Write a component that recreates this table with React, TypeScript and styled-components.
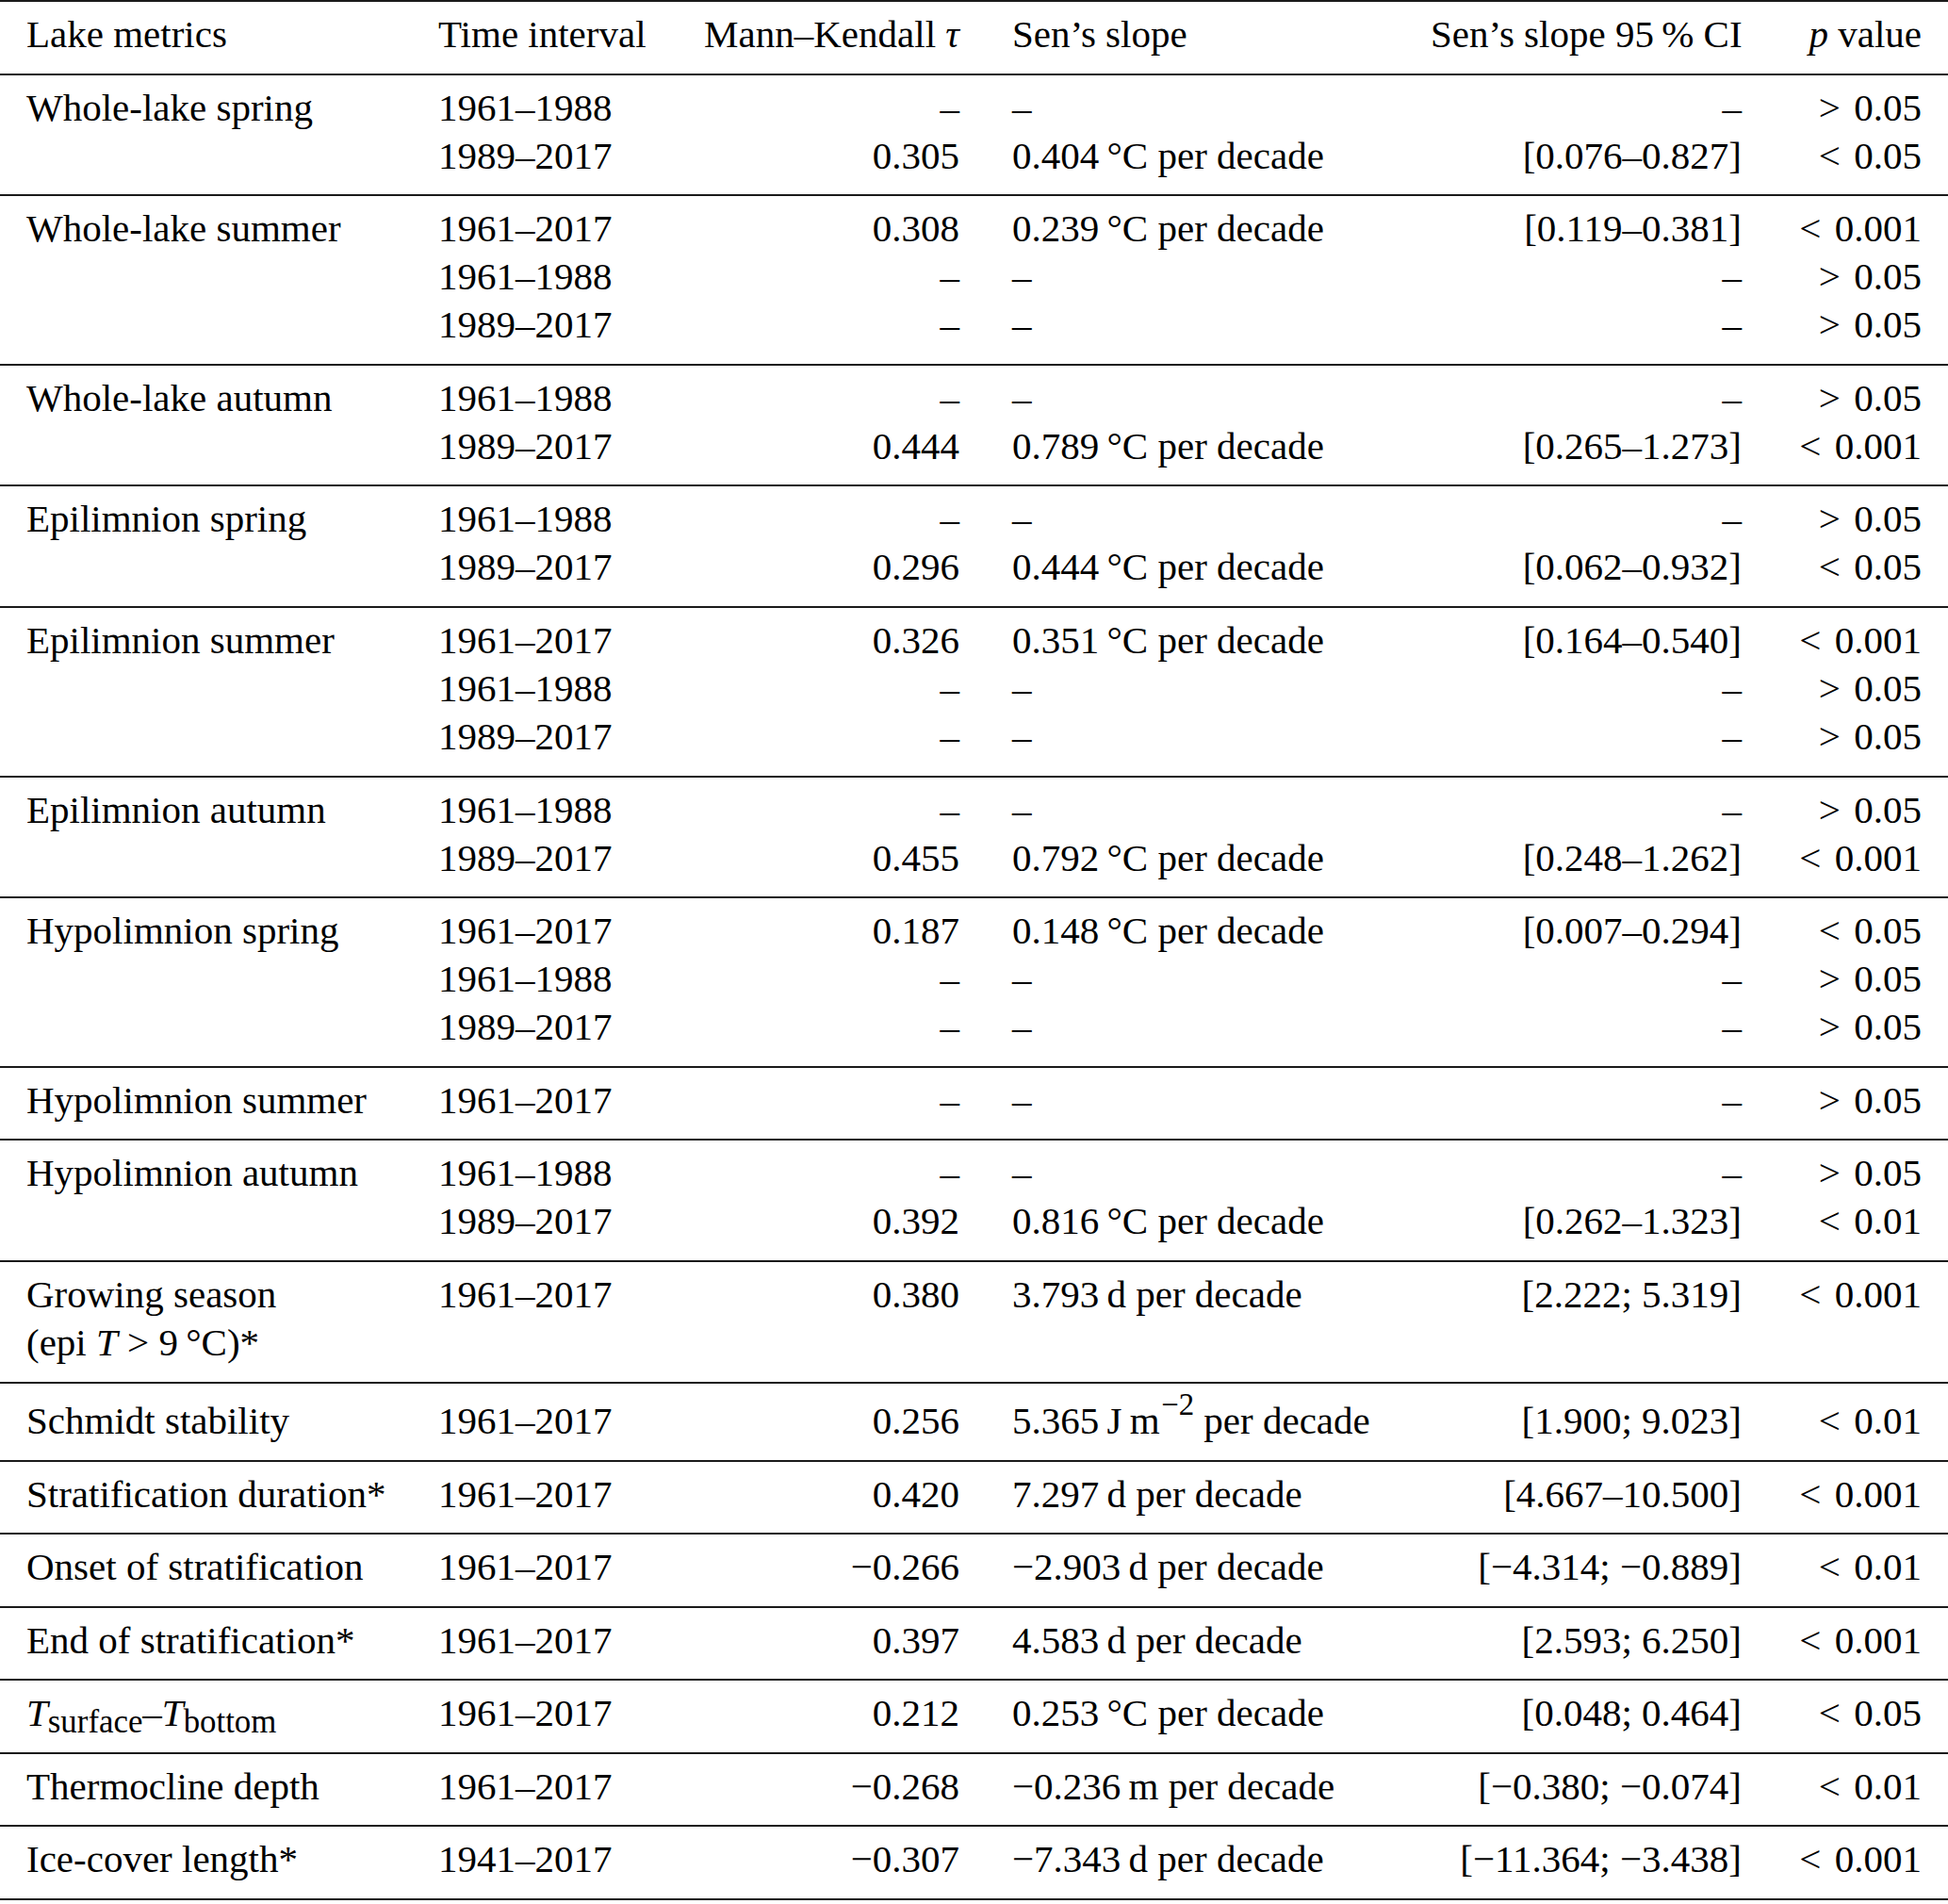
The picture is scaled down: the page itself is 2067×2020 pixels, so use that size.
import React, { type ReactNode } from "react";
import styled, { createGlobalStyle } from "styled-components";

/* ── Styled ── */

const GlobalStyle = createGlobalStyle`
  html, body {
    margin: 0;
    padding: 0;
    background: #ffffff;
  }
  body {
    font-family: "Liberation Serif", "Times New Roman", serif;
    color: #000000;
  }
`;

const Table = styled.div`
  width: 2067px;
  border-bottom: 2px solid #1a1a1a;
  font-size: 41px;
`;

const Group = styled.div<{ $extra?: number }>`
  display: grid;
  grid-template-columns: 437px 274px 335px 444px 386px 191px;
  border-top: 2px solid #1a1a1a;
  padding: ${(p) => 9 + (p.$extra ?? 0)}px 0 15.6px 0;
`;

const Cell = styled.div<{ $right?: boolean }>`
  display: flex;
  flex-direction: column;
  padding: 0 28px;
  text-align: ${(p) => (p.$right ? "right" : "left")};
  white-space: nowrap;
`;

const Line = styled.div`
  height: 51px;
  line-height: 51px;
`;

const I = styled.i`
  font-style: italic;
`;

const Rel = styled.span`
  padding-right: 0.1em;
`;

const Sub = styled.sub`
  font-size: 0.85em;
  vertical-align: -0.2em;
  line-height: 0;
`;

const Sup = styled.sup`
  font-size: 0.8em;
  vertical-align: 0.6em;
  line-height: 0;
  padding-left: 0.05em;
`;

/* ── Data ── */

const T = "\u2009";
const N = "–";
const M = "−";

type Values = [ReactNode, ReactNode, ReactNode, ReactNode, ReactNode];

type Row = {
  label: ReactNode[];
  lines: Values[];
  extra?: number;
};

const deg = (v: string) => `${v}${T}°C per decade`;
const days = (v: string) => `${v}${T}d per decade`;
const lt = (v: string) => (
  <>
    <Rel>&lt;</Rel> {v}
  </>
);
const gt = (v: string) => (
  <>
    <Rel>&gt;</Rel> {v}
  </>
);
const empty = (interval: string, p: ReactNode): Values => [interval, N, N, N, p];

const rows: Row[] = [
  {
    label: ["Whole-lake spring"],
    lines: [
      empty("1961–1988", gt("0.05")),
      ["1989–2017", "0.305", deg("0.404"), "[0.076–0.827]", lt("0.05")],
    ],
  },
  {
    label: ["Whole-lake summer"],
    lines: [
      ["1961–2017", "0.308", deg("0.239"), "[0.119–0.381]", lt("0.001")],
      empty("1961–1988", gt("0.05")),
      empty("1989–2017", gt("0.05")),
    ],
  },
  {
    label: ["Whole-lake autumn"],
    lines: [
      empty("1961–1988", gt("0.05")),
      ["1989–2017", "0.444", deg("0.789"), "[0.265–1.273]", lt("0.001")],
    ],
  },
  {
    label: ["Epilimnion spring"],
    lines: [
      empty("1961–1988", gt("0.05")),
      ["1989–2017", "0.296", deg("0.444"), "[0.062–0.932]", lt("0.05")],
    ],
  },
  {
    label: ["Epilimnion summer"],
    lines: [
      ["1961–2017", "0.326", deg("0.351"), "[0.164–0.540]", lt("0.001")],
      empty("1961–1988", gt("0.05")),
      empty("1989–2017", gt("0.05")),
    ],
  },
  {
    label: ["Epilimnion autumn"],
    lines: [
      empty("1961–1988", gt("0.05")),
      ["1989–2017", "0.455", deg("0.792"), "[0.248–1.262]", lt("0.001")],
    ],
  },
  {
    label: ["Hypolimnion spring"],
    lines: [
      ["1961–2017", "0.187", deg("0.148"), "[0.007–0.294]", lt("0.05")],
      empty("1961–1988", gt("0.05")),
      empty("1989–2017", gt("0.05")),
    ],
  },
  {
    label: ["Hypolimnion summer"],
    lines: [empty("1961–2017", gt("0.05"))],
  },
  {
    label: ["Hypolimnion autumn"],
    lines: [
      empty("1961–1988", gt("0.05")),
      ["1989–2017", "0.392", deg("0.816"), "[0.262–1.323]", lt("0.01")],
    ],
  },
  {
    label: [
      "Growing season",
      <>
        (epi <I>T</I> &gt; 9{T}°C)*
      </>,
    ],
    lines: [["1961–2017", "0.380", days("3.793"), "[2.222; 5.319]", lt("0.001")]],
  },
  {
    label: ["Schmidt stability"],
    extra: 5.4,
    lines: [
      [
        "1961–2017",
        "0.256",
        <>
          5.365{T}J{T}m<Sup>{M}2</Sup> per decade
        </>,
        "[1.900; 9.023]",
        lt("0.01"),
      ],
    ],
  },
  {
    label: ["Stratification duration*"],
    lines: [["1961–2017", "0.420", days("7.297"), "[4.667–10.500]", lt("0.001")]],
  },
  {
    label: ["Onset of stratification"],
    lines: [
      ["1961–2017", `${M}0.266`, days(`${M}2.903`), `[${M}4.314; ${M}0.889]`, lt("0.01")],
    ],
  },
  {
    label: ["End of stratification*"],
    lines: [["1961–2017", "0.397", days("4.583"), "[2.593; 6.250]", lt("0.001")]],
  },
  {
    label: [
      <>
        <I>T</I>
        <Sub>surface</Sub>–<I>T</I>
        <Sub>bottom</Sub>
      </>,
    ],
    lines: [["1961–2017", "0.212", deg("0.253"), "[0.048; 0.464]", lt("0.05")]],
  },
  {
    label: ["Thermocline depth"],
    lines: [
      [
        "1961–2017",
        `${M}0.268`,
        `${M}0.236${T}m per decade`,
        `[${M}0.380; ${M}0.074]`,
        lt("0.01"),
      ],
    ],
  },
  {
    label: ["Ice-cover length*"],
    lines: [
      ["1941–2017", `${M}0.307`, days(`${M}7.343`), `[${M}11.364; ${M}3.438]`, lt("0.001")],
    ],
  },
];

// alignment of the five value columns
const rightAligned = [false, true, false, true, true];

/* ── Page ── */

export default function App() {
  return (
    <>
      <GlobalStyle />
      <Table>
        <Group>
          <Cell>
            <Line>Lake metrics</Line>
          </Cell>
          <Cell>
            <Line>Time interval</Line>
          </Cell>
          <Cell $right>
            <Line>
              Mann–Kendall <I>τ</I>
            </Line>
          </Cell>
          <Cell>
            <Line>Sen’s slope</Line>
          </Cell>
          <Cell $right>
            <Line>Sen’s slope 95{T}% CI</Line>
          </Cell>
          <Cell $right>
            <Line>
              <I>p</I> value
            </Line>
          </Cell>
        </Group>

        {rows.map((row, ri) => (
          <Group key={ri} $extra={row.extra}>
            <Cell>
              {row.label.map((l, li) => (
                <Line key={li}>{l}</Line>
              ))}
            </Cell>
            {rightAligned.map((right, ci) => (
              <Cell key={ci} $right={right}>
                {row.lines.map((vals, li) => (
                  <Line key={li}>{vals[ci]}</Line>
                ))}
              </Cell>
            ))}
          </Group>
        ))}
      </Table>
    </>
  );
}
